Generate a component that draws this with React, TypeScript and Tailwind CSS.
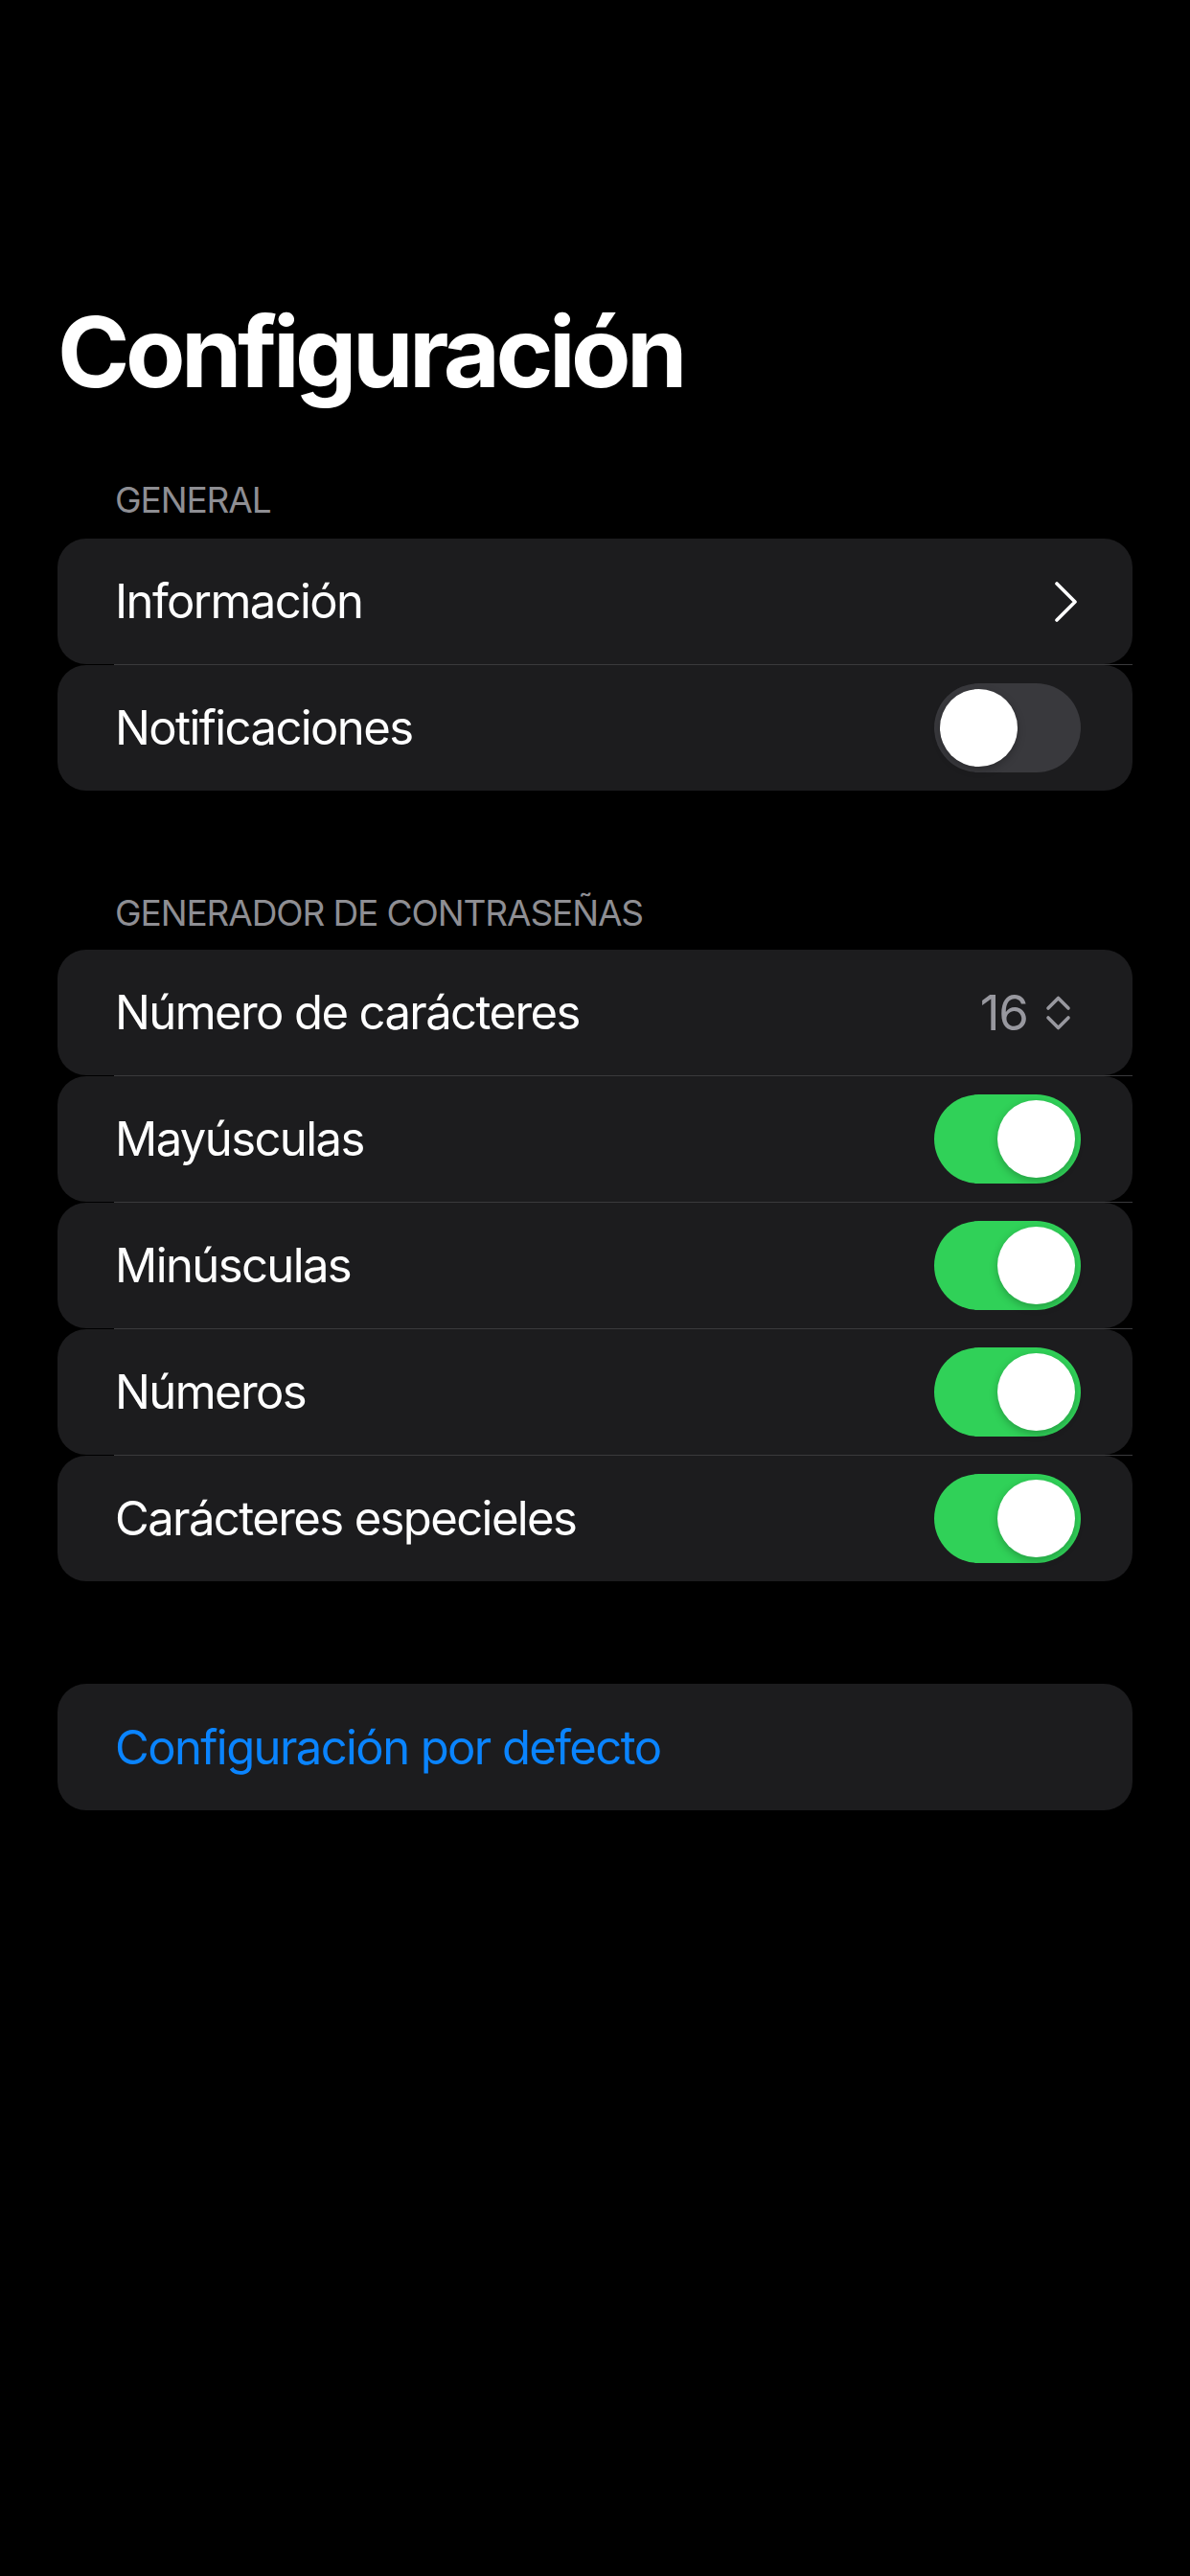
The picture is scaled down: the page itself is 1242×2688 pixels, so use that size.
import { Fragment } from "react";

type Row = {
  label: string;
  kind: "chevron" | "toggle" | "stepper";
  on?: boolean;
  value?: string;
};

const general: Row[] = [
  { label: "Información", kind: "chevron" },
  { label: "Notificaciones", kind: "toggle", on: false },
];

const generator: Row[] = [
  { label: "Número de carácteres", kind: "stepper", value: "16" },
  { label: "Mayúsculas", kind: "toggle", on: true },
  { label: "Minúsculas", kind: "toggle", on: true },
  { label: "Números", kind: "toggle", on: true },
  { label: "Carácteres especieles", kind: "toggle", on: true },
];

function Toggle({ on }: { on?: boolean }) {
  return (
    <div
      className={`w-[153px] h-[93px] rounded-full p-[6px] flex ${
        on ? "bg-[#30d158] justify-end" : "bg-[#39393d] justify-start"
      }`}
    >
      <div className="w-[81px] h-[81px] rounded-full bg-white shadow-[0_3px_8px_rgba(0,0,0,0.25)]" />
    </div>
  );
}

function Chevron() {
  return (
    <svg width="26" height="42" viewBox="0 0 26 42" fill="none" className="mr-[2px]">
      <path d="M3 2 L22 21 L3 40" stroke="#ffffff" strokeWidth="3.6" strokeLinecap="round" strokeLinejoin="round" />
    </svg>
  );
}

function UpDown() {
  return (
    <svg width="27" height="38" viewBox="0 0 27 38" fill="none">
      <path d="M3 14 L13.5 3.5 L24 14" stroke="#98989f" strokeWidth="3.6" strokeLinecap="round" strokeLinejoin="round" />
      <path d="M3 24 L13.5 34.5 L24 24" stroke="#98989f" strokeWidth="3.6" strokeLinecap="round" strokeLinejoin="round" />
    </svg>
  );
}

function Group({ rows }: { rows: Row[] }) {
  return (
    <div className="flex flex-col">
      {rows.map((row, i) => (
        <Fragment key={row.label}>
          {i > 0 && <div className="ml-[59px] h-px bg-[#3a3a3c]" />}
          <div className="h-[131px] rounded-[30px] bg-[#1c1c1e] flex items-center justify-between pl-[60px] pr-[54px]">
            <span className="text-[49px] leading-none text-white tracking-[-1.6px]">{row.label}</span>
            {row.kind === "chevron" && <Chevron />}
            {row.kind === "toggle" && <Toggle on={row.on} />}
            {row.kind === "stepper" && (
              <div className="flex items-center gap-[18px] mr-[10px]">
                <span className="text-[51px] leading-none text-[#98989f] tracking-[-1px]">{row.value}</span>
                <UpDown />
              </div>
            )}
          </div>
        </Fragment>
      ))}
    </div>
  );
}

function Header({ children }: { children: string }) {
  return (
    <div className="pl-[60px] text-[37px] leading-[39px] h-[39px] text-[#8e8e93] tracking-[-1.1px]">
      {children}
    </div>
  );
}

export default function App() {
  return (
    <div className="min-h-[2688px] bg-black px-[60px] font-['Inter',sans-serif]">
      <h1 className="pt-[316px] text-[102px] leading-[102px] font-bold text-white tracking-[-4.5px]">
        Configuración
      </h1>
      <div className="mt-[84px]">
        <Header>GENERAL</Header>
      </div>
      <div className="mt-[21px]">
        <Group rows={general} />
      </div>
      <div className="mt-[108px]">
        <Header>GENERADOR DE CONTRASEÑAS</Header>
      </div>
      <div className="mt-[19px]">
        <Group rows={generator} />
      </div>
      <div className="mt-[107px] h-[132px] rounded-[30px] bg-[#1c1c1e] flex items-center pl-[60px]">
        <span className="text-[49px] leading-none text-[#0a84ff] tracking-[-1.6px]">Configuración por defecto</span>
      </div>
    </div>
  );
}
